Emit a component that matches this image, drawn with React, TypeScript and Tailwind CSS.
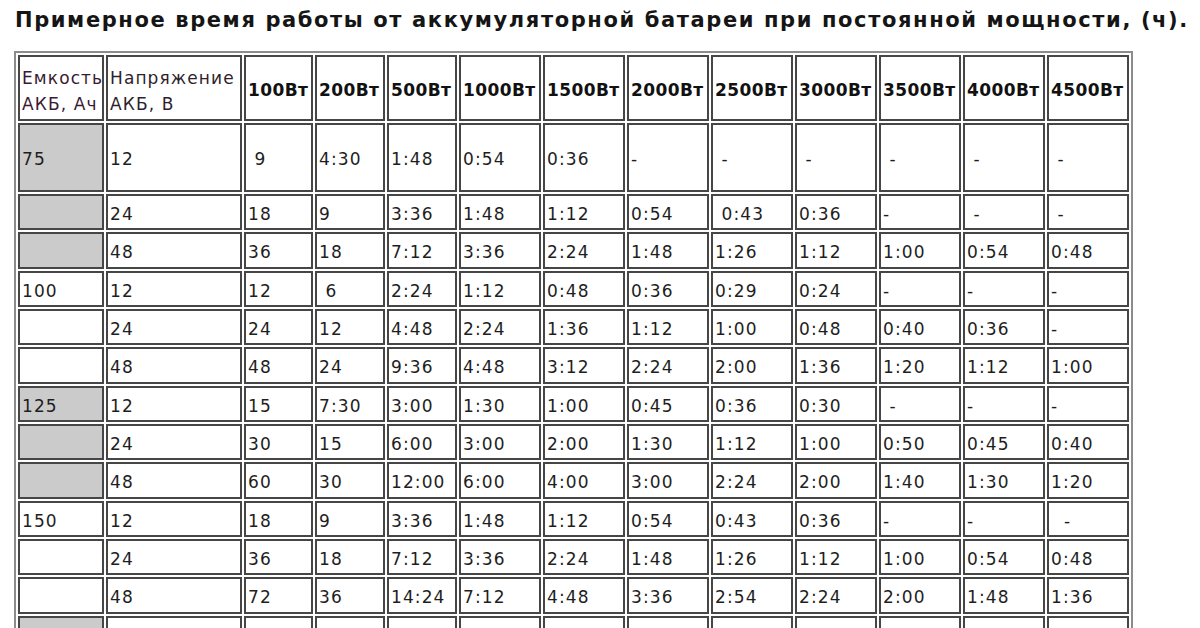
const headers = [
  '100Вт',
  '200Вт',
  '500Вт',
  '1000Вт',
  '1500Вт',
  '2000Вт',
  '2500Вт',
  '3000Вт',
  '3500Вт',
  '4000Вт',
  '4500Вт',
];

const colWidths = [
  'w-[86px]',
  'w-[136px]',
  'w-[69px]',
  'w-[70px]',
  'w-[70px]',
  'w-[82px]',
  'w-[82px]',
  'w-[82px]',
  'w-[82px]',
  'w-[82px]',
  'w-[82px]',
  'w-[82px]',
  'w-[82px]',
];

type Row = { cap: string; gray: boolean; tall?: boolean; cells: string[] };

const rows: Row[] = [
  { cap: '75', gray: true, tall: true, cells: ['12', ' 9', '4:30', '1:48', '0:54', '0:36', '-', ' -', ' -', ' -', ' -', ' -'] },
  { cap: '', gray: true, cells: ['24', '18', '9', '3:36', '1:48', '1:12', '0:54', ' 0:43', '0:36', '-', ' -', ' -'] },
  { cap: '', gray: true, cells: ['48', '36', '18', '7:12', '3:36', '2:24', '1:48', '1:26', '1:12', '1:00', '0:54', '0:48'] },
  { cap: '100', gray: false, cells: ['12', '12', ' 6', '2:24', '1:12', '0:48', '0:36', '0:29', '0:24', '-', '-', '-'] },
  { cap: '', gray: false, cells: ['24', '24', '12', '4:48', '2:24', '1:36', '1:12', '1:00', '0:48', '0:40', '0:36', '-'] },
  { cap: '', gray: false, cells: ['48', '48', '24', '9:36', '4:48', '3:12', '2:24', '2:00', '1:36', '1:20', '1:12', '1:00'] },
  { cap: '125', gray: true, cells: ['12', '15', '7:30', '3:00', '1:30', '1:00', '0:45', '0:36', '0:30', ' -', '-', '-'] },
  { cap: '', gray: true, cells: ['24', '30', '15', '6:00', '3:00', '2:00', '1:30', '1:12', '1:00', '0:50', '0:45', '0:40'] },
  { cap: '', gray: true, cells: ['48', '60', '30', '12:00', '6:00', '4:00', '3:00', '2:24', '2:00', '1:40', '1:30', '1:20'] },
  { cap: '150', gray: false, cells: ['12', '18', '9', '3:36', '1:48', '1:12', '0:54', '0:43', '0:36', '-', '-', '  -'] },
  { cap: '', gray: false, cells: ['24', '36', '18', '7:12', '3:36', '2:24', '1:48', '1:26', '1:12', '1:00', '0:54', '0:48'] },
  { cap: '', gray: false, cells: ['48', '72', '36', '14:24', '7:12', '4:48', '3:36', '2:54', '2:24', '2:00', '1:48', '1:36'] },
  // next group begins at the bottom edge; only its top border is in view
  { cap: '', gray: true, tall: true, cells: Array(12).fill('') },
];

const cell = 'border-2 border-[#464646] pl-[2px] pt-[5px] align-middle';

export default function App() {
  return (
    <div className="h-[628px] w-[1200px] overflow-hidden bg-white font-['DejaVu_Sans',sans-serif] text-[#1e1e1e]">
      <h1 className="whitespace-nowrap pl-[15px] pt-[8px] text-[21px] font-bold leading-[25px] tracking-[1.6px] text-[#151515]">
        Примерное время работы от аккумуляторной батареи при постоянной мощности, (ч).
      </h1>

      <table className="ml-[14px] mt-[18px] w-[1119px] table-fixed border-separate border-spacing-[2px] border-2 border-[#8c8c8c] text-[17px] tracking-[1.1px]">
        <colgroup>
          {colWidths.map((w, i) => (
            <col key={i} className={w} />
          ))}
        </colgroup>
        <thead>
          <tr className="h-[66px]">
            <th className={`${cell} text-left font-normal leading-[26px] text-[#3a1a33]`}>
              Емкость АКБ, Ач
            </th>
            <th className={`${cell} text-left font-normal leading-[26px] text-[#2e1f2c]`}>
              Напряжение АКБ, В
            </th>
            {headers.map((h) => (
              <th key={h} className={`${cell} whitespace-nowrap text-left text-[17px] font-bold tracking-[0.4px] text-[#111]`}>
                {h}
              </th>
            ))}
          </tr>
        </thead>
        <tbody>
          {rows.map((r, i) => (
            <tr key={i} className={r.tall ? 'h-[69px]' : 'h-[36.33px]'}>
              <td className={`${cell} ${r.gray ? 'bg-[#cbcbcb]' : ''}`}>{r.cap}</td>
              {r.cells.map((c, j) => (
                <td key={j} className={`${cell} whitespace-pre`}>
                  {c}
                </td>
              ))}
            </tr>
          ))}
        </tbody>
      </table>
    </div>
  );
}
